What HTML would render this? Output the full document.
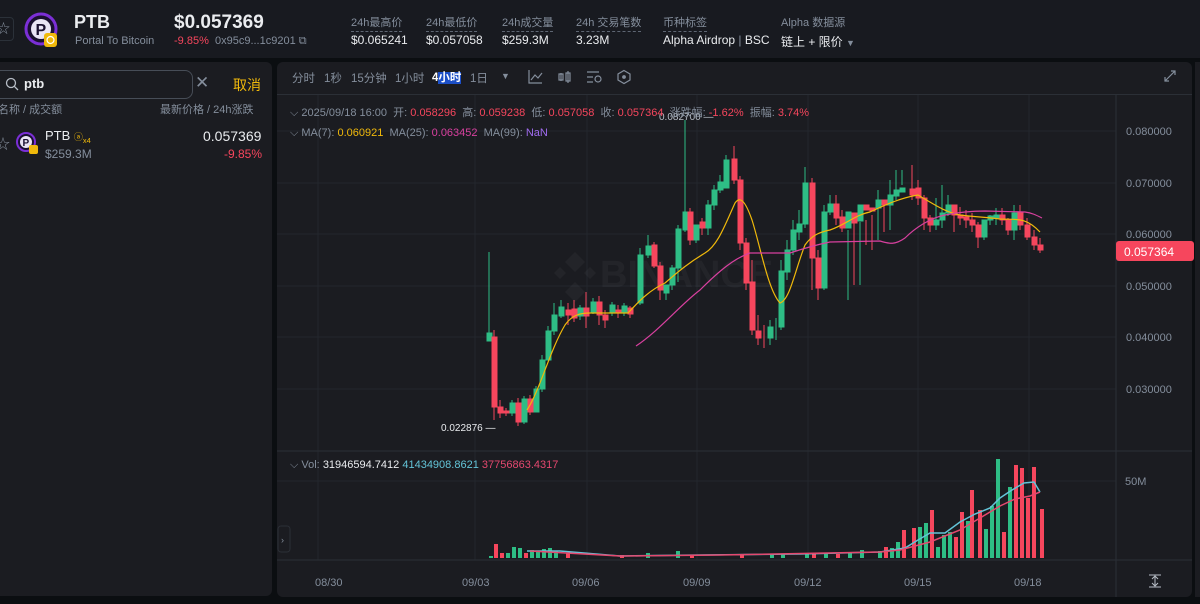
<!DOCTYPE html>
<html><head><meta charset="utf-8">
<style>
*{margin:0;padding:0;box-sizing:border-box}
body{width:1200px;height:604px;background:#0b0e11;font-family:"Liberation Sans","Noto Sans CJK SC",sans-serif;color:#eaecef;position:relative;overflow:hidden}
.hdr{position:absolute;left:0;top:0;width:1200px;height:58px;background:#181a20}
.abs{position:absolute;white-space:nowrap}
.g{color:#848e9c}
.red{color:#f6465d}
.grn{color:#2ebd85}
.lbl{font-size:11px;color:#848e9c;border-bottom:1px dashed #5e6673;padding-bottom:1px}
.val{font-size:12px;color:#eaecef}
.panel{position:absolute;background:#1b1c21;border-radius:6px}
</style></head><body>
<div class="hdr"></div>
<div class="abs" style="left:-6px;top:17px;width:20px;height:24px;border:1px solid #2b3139;border-radius:4px;color:#848e9c;font-size:13px;line-height:22px;text-align:right;padding-right:3px">☆</div>
<svg class="abs" style="left:24px;top:12px" width="40" height="40" viewBox="0 0 40 40">
<circle cx="17" cy="17" r="15" fill="#1a1030" stroke="#7b2fd6" stroke-width="3"/>
<circle cx="17" cy="17" r="10" fill="#e9e4f5"/>
<text x="11.5" y="23" font-family="Liberation Sans" font-weight="bold" font-size="16" fill="#1a1030">P</text>
<rect x="20" y="21" width="13" height="14" rx="3" fill="#f0b90b"/>
<circle cx="26.5" cy="28" r="3.5" fill="none" stroke="#fff" stroke-width="1.2"/>
</svg>
<div class="abs" style="left:74px;top:12px;font-size:18px;font-weight:bold">PTB</div>
<div class="abs g" style="left:75px;top:35px;font-size:11px">Portal To Bitcoin</div>
<div class="abs" style="left:174px;top:12px;font-size:19px;font-weight:bold">$0.057369</div>
<div class="abs" style="left:174px;top:35px;font-size:11px"><span class="red">-9.85%</span> <span class="g">&nbsp;0x95c9...1c9201 ⧉</span></div>
<div class="abs lbl" style="left:351px;top:14px">24h最高价</div><div class="abs val" style="left:351px;top:33px">$0.065241</div>
<div class="abs lbl" style="left:426px;top:14px">24h最低价</div><div class="abs val" style="left:426px;top:33px">$0.057058</div>
<div class="abs lbl" style="left:502px;top:14px">24h成交量</div><div class="abs val" style="left:502px;top:33px">$259.3M</div>
<div class="abs lbl" style="left:576px;top:14px">24h 交易笔数</div><div class="abs val" style="left:576px;top:33px">3.23M</div>
<div class="abs lbl" style="left:663px;top:14px">币种标签</div><div class="abs val" style="left:663px;top:33px">Alpha Airdrop <span class="g">|</span> BSC</div>
<div class="abs" style="left:781px;top:14px;font-size:11px;color:#848e9c">Alpha 数据源</div><div class="abs val" style="left:781px;top:33px">链上 + 限价 <span class="g" style="font-size:9px">▼</span></div>

<div class="panel" style="left:-6px;top:62px;width:278px;height:534px"></div>
<div class="abs" style="left:-10px;top:70px;width:203px;height:29px;border:1px solid #474d57;border-radius:8px"></div>
<svg class="abs" style="left:5px;top:77px" width="14" height="14" viewBox="0 0 14 14"><circle cx="6" cy="6" r="4.5" fill="none" stroke="#b7bdc6" stroke-width="1.3"/><path d="M9.3 9.3L13 13" stroke="#b7bdc6" stroke-width="1.3"/></svg>
<div class="abs" style="left:24px;top:76px;font-size:13px;font-weight:bold">ptb</div>
<div class="abs g" style="left:195px;top:73px;font-size:17px">✕</div>
<div class="abs" style="left:233px;top:75px;font-size:14px;color:#f0b90b">取消</div>
<div class="abs g" style="left:-2px;top:101px;font-size:11px">名称 / 成交额</div>
<div class="abs g" style="left:160px;top:101px;font-size:11px">最新价格 / 24h涨跌</div>
<div class="abs g" style="left:-4px;top:134px;font-size:14px">☆</div>
<svg class="abs" style="left:15px;top:131px" width="26" height="26" viewBox="0 0 26 26"><circle cx="11" cy="11" r="9" fill="#1a1030" stroke="#7b2fd6" stroke-width="2"/><circle cx="11" cy="11" r="6" fill="#e9e4f5"/><text x="7.5" y="15" font-family="Liberation Sans" font-weight="bold" font-size="10" fill="#1a1030">P</text><rect x="14" y="14" width="9" height="9" rx="2" fill="#f0b90b"/></svg>
<div class="abs" style="left:45px;top:128px;font-size:13px">PTB <span style="color:#f0b90b;font-size:9px">ⓐ<sub>x4</sub></span></div>
<div class="abs g" style="left:45px;top:147px;font-size:12px">$259.3M</div>
<div class="abs" style="left:203px;top:128px;font-size:14px">0.057369</div>
<div class="abs red" style="left:224px;top:147px;font-size:12px">-9.85%</div>

<div class="panel" style="left:277px;top:62px;width:915px;height:535px"></div>
<div class="abs" style="left:1195px;top:62px;width:5px;height:535px;background:#1b1c21"></div>
<div class="abs g" style="left:292px;top:70px;font-size:11.5px">分时</div>
<div class="abs g" style="left:324px;top:70px;font-size:11.5px">1秒</div>
<div class="abs g" style="left:351px;top:70px;font-size:11.5px">15分钟</div>
<div class="abs g" style="left:395px;top:70px;font-size:11.5px">1小时</div>
<div class="abs" style="left:432px;top:69px;font-size:11.5px;font-weight:bold;color:#fff">4<span style="background:#1c4fc7">小时</span></div>
<div class="abs g" style="left:470px;top:70px;font-size:11.5px">1日</div>
<div class="abs g" style="left:501px;top:71px;font-size:9px">▼</div>
<svg class="abs" style="left:527px;top:69px" width="110" height="16" viewBox="0 0 110 16" fill="none" stroke="#848e9c" stroke-width="1.2">
<path d="M2 1V14H15M4 11L8 6L11 9L15 4"/>
<path d="M34 4V12M32 5h4v6h-4zM41 2V14M39 4h4v8h-4z"/>
<path d="M60 3h12M60 8h6M60 13h6"/><circle cx="71" cy="10" r="3"/>
<path d="M97 1.5L103 5V11L97 14.5L91 11V5Z"/><circle cx="97" cy="8" r="1.3" fill="#848e9c"/>
</svg>
<svg class="abs" style="left:1163px;top:69px" width="14" height="14" viewBox="0 0 14 14" stroke="#848e9c" stroke-width="1.2" fill="none"><path d="M2 12L12 2M8 2h4v4M2 8v4h4"/></svg>
<div class="abs" style="left:277px;top:94px;width:915px;height:1px;background:#2b2f36"></div>

<svg class="abs" style="left:0;top:0" width="1200" height="604">
<g stroke="#23262d" stroke-width="1">
<path d="M318 95V560M475 95V560M587 95V560M697 95V560M808 95V560M918 95V560M1029 95V560"/>
<path d="M277 131H1116M277 183H1116M277 234H1116M277 286H1116M277 337H1116M277 389H1116M277 481H1116"/>
</g>
<path d="M1116 95V597M277 451H1192M277 560H1192" stroke="#2b2f36"/>
<g opacity="0.035" fill="#fff"><path d="M575 252l10 10-10 10-10-10zM560 267l6 6-6 6-6-6zM590 267l6 6-6 6-6-6zM575 282l10 10-10 10-10-10z"/><text x="600" y="287" font-size="38" font-weight="bold" font-family="Liberation Sans">BINANCE</text></g>
<g stroke-width="1">
<g fill="#2ebd85" stroke="#2ebd85">
<path d="M489 252V341M512 400V416M524 396V424M536 386V412M542 355V392M548 326V360M554 303V335M561 300V318M580 305V320M593 298V314M612 302V316M624 303V316M640 248V305M648 235V258M666 285V300M672 265V290M678 225V282M685 120V232M696 228V243M708 200V235M714 185V210M720 175V193M726 155V188M770 320V345M776 318V340M781 260V330M787 240V280M793 220V255M799 210V240M805 167V228M824 205V290M830 195V215M848 230V300M860 222V285M878 190V240M890 180V230M896 170V200M902 170V185M936 198V230M942 185V228M948 195V216M984 220V240M990 215V225M996 208V225M1014 205V240"/>
<rect x="487" y="333" width="5" height="8"/><rect x="510" y="403" width="5" height="10"/><rect x="522" y="399" width="5" height="23"/><rect x="534" y="389" width="5" height="23"/><rect x="540" y="360" width="5" height="29"/><rect x="546" y="331" width="5" height="29"/><rect x="552" y="315" width="5" height="16"/><rect x="559" y="307" width="5" height="9"/><rect x="578" y="308" width="5" height="8"/><rect x="591" y="302" width="5" height="10"/><rect x="610" y="305" width="5" height="8"/><rect x="622" y="306" width="5" height="7"/><rect x="638" y="255" width="5" height="48"/><rect x="646" y="246" width="5" height="9"/><rect x="664" y="285" width="5" height="8"/><rect x="670" y="268" width="5" height="17"/><rect x="676" y="229" width="5" height="39"/><rect x="683" y="212" width="5" height="18"/><rect x="694" y="225" width="5" height="15"/><rect x="706" y="205" width="5" height="23"/><rect x="712" y="190" width="5" height="15"/><rect x="718" y="182" width="5" height="8"/><rect x="724" y="160" width="5" height="28"/><rect x="768" y="327" width="5" height="11"/><rect x="779" y="271" width="5" height="56"/><rect x="785" y="250" width="5" height="22"/><rect x="791" y="230" width="5" height="20"/><rect x="797" y="224" width="5" height="8"/><rect x="803" y="183" width="5" height="41"/><rect x="822" y="212" width="5" height="76"/><rect x="828" y="204" width="5" height="8"/><rect x="846" y="212" width="5" height="16"/><rect x="858" y="205" width="5" height="16"/><rect x="876" y="200" width="5" height="8"/><rect x="888" y="195" width="5" height="10"/><rect x="894" y="190" width="5" height="6"/><rect x="900" y="188" width="5" height="4"/><rect x="934" y="220" width="5" height="5"/><rect x="940" y="213" width="5" height="7"/><rect x="946" y="205" width="5" height="8"/><rect x="982" y="220" width="5" height="17"/><rect x="988" y="216" width="5" height="4"/><rect x="994" y="215" width="5" height="3"/><rect x="1012" y="213" width="5" height="17"/>
</g>
<g fill="#f6465d" stroke="#f6465d">
<path d="M494 330V420M500 400V418M506 408V416M518 398V426M530 395V415M568 303V325M574 300V322M586 292V328M599 296V325M605 310V328M618 305V318M630 306V318M654 242V268M660 262V300M690 208V245M702 218V235M734 146V184M740 176V250M746 238V290M752 260V335M758 315V345M764 325V348M812 178V290M818 250V300M836 195V225M842 210V232M854 218V285M866 220V245M872 215V250M884 205V232M912 165V200M918 180V205M924 195V230M930 215V232M954 205V232M960 207V225M966 210V228M972 213V232M978 222V248M1002 208V225M1008 218V235M1020 205V230M1027 218V240M1034 230V250M1040 238V253"/>
<rect x="492" y="337" width="5" height="70"/><rect x="498" y="407" width="5" height="6"/><rect x="504" y="411" width="5" height="2"/><rect x="516" y="403" width="5" height="19"/><rect x="528" y="399" width="5" height="13"/><rect x="566" y="310" width="5" height="5"/><rect x="572" y="309" width="5" height="9"/><rect x="584" y="308" width="5" height="8"/><rect x="597" y="302" width="5" height="13"/><rect x="603" y="315" width="5" height="5"/><rect x="616" y="310" width="5" height="3"/><rect x="628" y="308" width="5" height="6"/><rect x="652" y="245" width="5" height="21"/><rect x="658" y="266" width="5" height="24"/><rect x="688" y="212" width="5" height="28"/><rect x="700" y="222" width="5" height="6"/><rect x="732" y="159" width="5" height="21"/><rect x="738" y="180" width="5" height="63"/><rect x="744" y="243" width="5" height="40"/><rect x="750" y="282" width="5" height="48"/><rect x="756" y="331" width="5" height="7"/><rect x="810" y="183" width="5" height="75"/><rect x="816" y="258" width="5" height="30"/><rect x="834" y="204" width="5" height="14"/><rect x="840" y="217" width="5" height="11"/><rect x="852" y="213" width="5" height="10"/><rect x="864" y="205" width="5" height="5"/><rect x="870" y="208" width="5" height="3"/><rect x="882" y="200" width="5" height="5"/><rect x="910" y="189" width="5" height="6"/><rect x="916" y="188" width="5" height="10"/><rect x="922" y="198" width="5" height="20"/><rect x="928" y="218" width="5" height="7"/><rect x="952" y="205" width="5" height="10"/><rect x="958" y="215" width="5" height="3"/><rect x="964" y="217" width="5" height="3"/><rect x="970" y="220" width="5" height="5"/><rect x="976" y="225" width="5" height="12"/><rect x="1000" y="215" width="5" height="5"/><rect x="1006" y="220" width="5" height="10"/><rect x="1018" y="212" width="5" height="13"/><rect x="1025" y="225" width="5" height="12"/><rect x="1032" y="237" width="5" height="8"/><rect x="1038" y="245" width="5" height="5"/>
</g>
</g>
<path d="M527 410C540 390 550 350 565 325C572 315 580 313 590 313L628 313C640 300 650 290 665 283C680 270 690 262 705 253C718 245 725 225 735 203C740 196 745 200 752 220C760 245 768 290 780 303C790 300 795 270 805 245C812 235 820 232 830 230C845 225 855 215 870 212C885 205 900 198 918 195C935 205 945 212 960 215C975 217 985 217 1000 219C1015 220 1025 216 1040 232" fill="none" stroke="#f0b90b" stroke-width="1.2"/>
<path d="M636 346C660 330 680 305 700 290C720 270 735 258 750 253L790 253C805 248 815 245 830 242L880 241C890 244 895 245 905 238C915 228 930 218 945 215C960 212 970 211 985 211L1025 212C1032 213 1036 215 1042 218" fill="none" stroke="#d8409f" stroke-width="1.2"/>
<g fill="#2ebd85"><path d="M489 556h4v2h-4zM506 553h4v5h-4zM512 547h4v11h-4zM518 548h4v10h-4zM530 550h4v8h-4zM536 551h4v7h-4zM542 549h4v9h-4zM548 548h4v10h-4zM554 551h4v7h-4zM646 553h4v5h-4zM676 551h4v7h-4zM770 555h4v3h-4zM781 554h4v4h-4zM805 554h4v4h-4zM824 553h4v5h-4zM848 553h4v5h-4zM860 550h4v8h-4zM878 551h4v7h-4zM890 548h4v10h-4zM896 542h4v16h-4zM918 527h4v31h-4zM924 523h4v35h-4zM936 547h4v11h-4zM942 535h4v23h-4zM948 532h4v26h-4zM966 521h4v37h-4zM984 529h4v29h-4zM990 506h4v52h-4zM996 459h4v99h-4zM1002 532h4v26h-4zM1008 487h4v71h-4z"/></g>
<g fill="#f6465d"><path d="M494 544h4v14h-4zM500 553h4v5h-4zM524 553h4v5h-4zM566 553h4v5h-4zM620 555h4v3h-4zM690 555h4v3h-4zM740 554h4v4h-4zM812 554h4v4h-4zM836 554h4v4h-4zM884 547h4v11h-4zM902 530h4v28h-4zM912 528h4v30h-4zM930 510h4v48h-4zM954 537h4v21h-4zM960 512h4v46h-4zM970 490h4v68h-4zM978 510h4v48h-4zM1002 532h4v26h-4zM1014 465h4v93h-4zM1020 468h4v90h-4zM1026 498h4v60h-4zM1032 467h4v91h-4zM1040 509h4v49h-4z"/></g>
<path d="M527 551L560 551L620 556L700 555L800 554L880 552L905 548L918 540L930 533L945 533L960 522L975 514L990 508L1000 498L1012 490L1024 483L1034 482L1040 492" fill="none" stroke="#63c4d8" stroke-width="1.5"/>
<path d="M530 551L620 556L720 555L880 552L900 550L930 542L960 530L980 518L1000 506L1015 499L1030 496L1040 492" fill="none" stroke="#e5486f" stroke-width="1.5"/>
<rect x="1116" y="241" width="78" height="20" rx="3" fill="#f6465d"/>
<text x="1124" y="256" font-size="12" fill="#fff" font-family="Liberation Sans">0.057364</text>
<g font-family="Liberation Sans" font-size="11" fill="#848e9c">
<text x="1126" y="135">0.080000</text><text x="1126" y="187">0.070000</text><text x="1126" y="238">0.060000</text><text x="1126" y="290">0.050000</text><text x="1126" y="341">0.040000</text><text x="1126" y="393">0.030000</text><text x="1125" y="485">50M</text>
<text x="315" y="586">08/30</text><text x="462" y="586">09/03</text><text x="572" y="586">09/06</text><text x="683" y="586">09/09</text><text x="794" y="586">09/12</text><text x="904" y="586">09/15</text><text x="1014" y="586">09/18</text>
</g>
<text x="441" y="431" font-size="10" fill="#eaecef" font-family="Liberation Sans">0.022876 —</text>
<text x="659" y="120" font-size="10" fill="#b7bdc6" font-family="Liberation Sans">0.082700 —</text>
<path d="M1149 575h12M1149 587h12M1155 576v10M1152 579l3-3 3 3M1152 583l3 3 3-3" stroke="#b7bdc6" fill="none"/>
<rect x="278" y="526" width="12" height="26" rx="3" fill="none" stroke="#2b2f36"/>
<text x="281" y="543" font-size="9" fill="#848e9c">›</text>
</svg>
<div class="abs" style="left:290px;top:104px;font-size:11px"><span class="g">⌵ 2025/09/18 16:00 &nbsp;开: </span><span class="red">0.058296</span><span class="g"> &nbsp;高: </span><span class="red">0.059238</span><span class="g"> &nbsp;低: </span><span class="red">0.057058</span><span class="g"> &nbsp;收: </span><span class="red">0.057364</span><span class="g"> &nbsp;涨跌幅: </span><span class="red">-1.62%</span><span class="g"> &nbsp;振幅: </span><span class="red">3.74%</span></div>
<div class="abs" style="left:290px;top:127px;font-size:11px"><span class="g">⌵ MA(7): </span><span style="color:#f0b90b">0.060921</span><span class="g"> &nbsp;MA(25): </span><span style="color:#d8409f">0.063452</span><span class="g"> &nbsp;MA(99): </span><span style="color:#a06bf0">NaN</span></div>
<div class="abs" style="left:290px;top:459px;font-size:11px"><span class="g">⌵ Vol: </span><span>31946594.7412</span> <span style="color:#63c4d8">41434908.8621</span> <span style="color:#e5486f">37756863.4317</span></div>
</body></html>
